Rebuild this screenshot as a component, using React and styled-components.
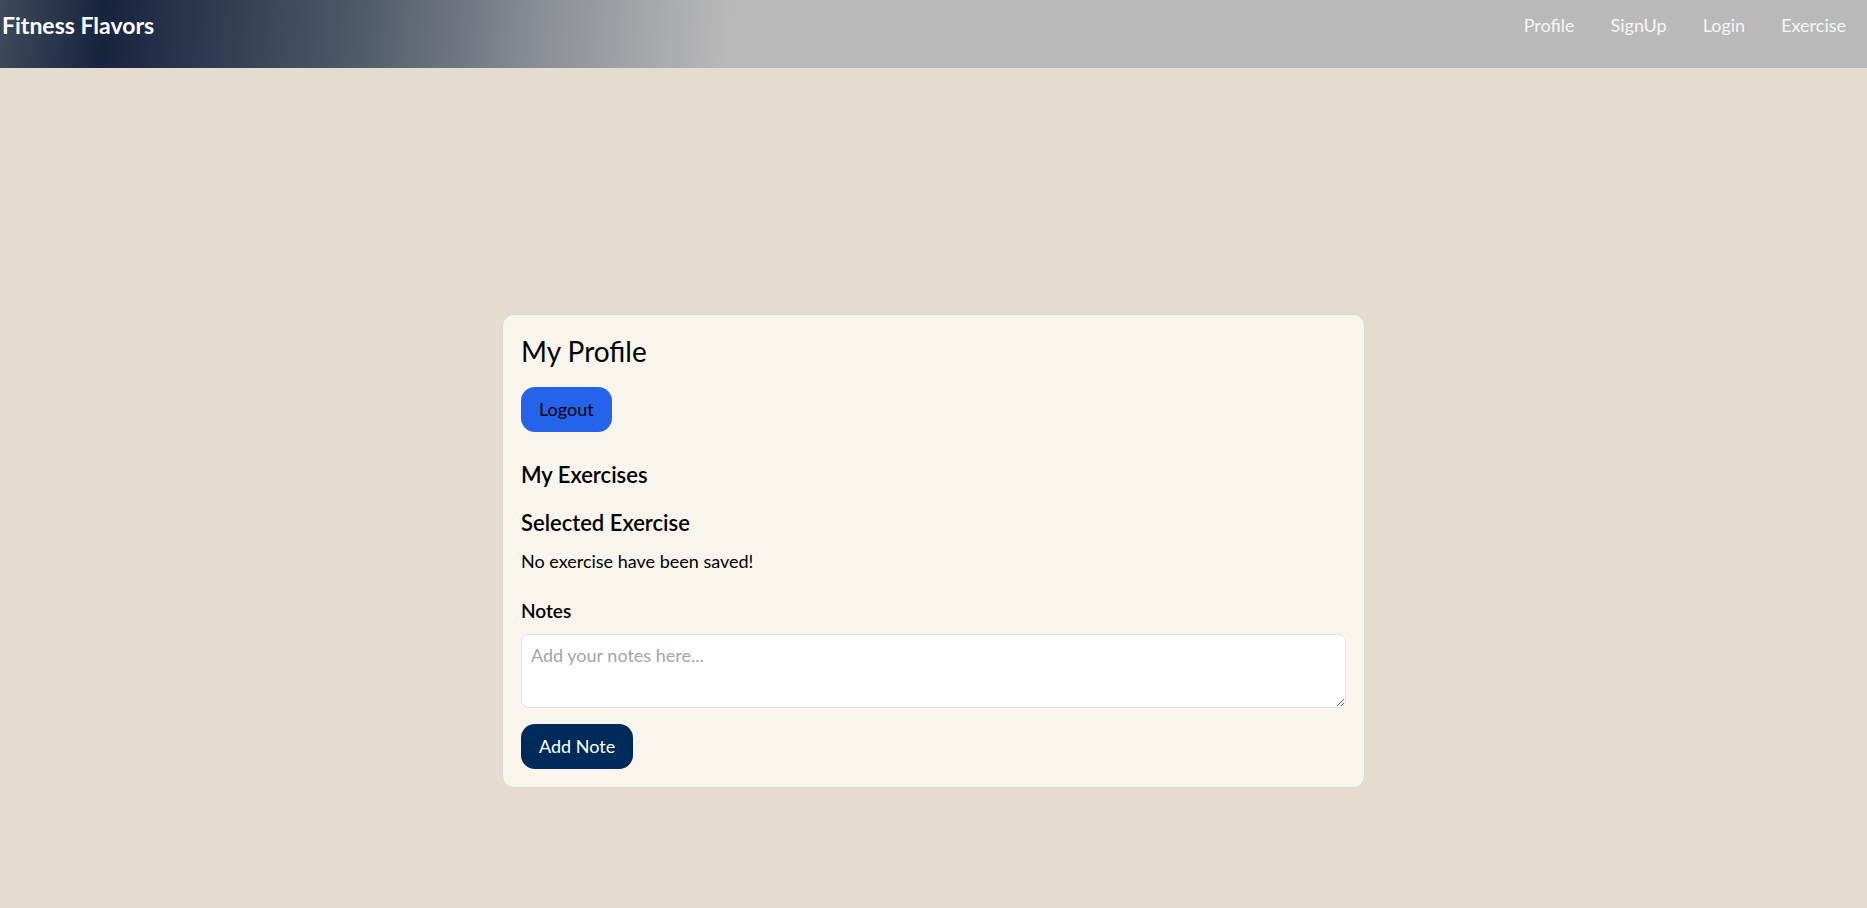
import React from "react";
import styled, { createGlobalStyle } from "styled-components";

const Global = createGlobalStyle`
  html, body { margin: 0; padding: 0; }
  body {
    background: #e4dccf;
    font-family: "Lato", "Noto Sans", sans-serif;
    color: #000;
  }
  * { box-sizing: border-box; }
`;

const Header = styled.header`
  height: 68px;
  display: flex;
  align-items: flex-start;
  justify-content: space-between;
  padding: 11px 21px 0 2px;
  background: linear-gradient(95deg, #3f4a5c 0px, #17243f 105px, #4f5a6a 360px, #8d9097 550px, #b9b9b9 730px, #b9b9b9 100%);
`;

const Brand = styled.div`
  font-size: 23px;
  line-height: 1.2;
  font-weight: 700;
  color: #fff;
  margin-top: 1px;
`;

const Nav = styled.nav`
  display: flex;
  gap: 36px;
  padding-top: 4px;
`;

const NavLink = styled.a`
  font-size: 18px;
  line-height: 1.2;
  color: #f6f6f6;
  text-decoration: none;
  cursor: pointer;
`;

const Card = styled.section`
  width: 863px;
  margin: 246px auto 0;
  background: #f9f5ec;
  border: 1px solid #dcd9d6;
  border-radius: 12px;
  padding: 18px;
  display: flex;
  flex-direction: column;
  align-items: flex-start;
`;

const Title = styled.h2`
  margin: 2px 0 18px;
  font-size: 28px;
  line-height: 1.2;
  font-weight: 400;
`;

const SubTitle = styled.h3`
  margin: ${(p) => p.$mt || 0}px 0 0;
  font-size: ${(p) => p.$size || 22}px;
  line-height: 1.2;
  font-weight: 600;
`;

const Text = styled.p`
  margin: 15px 0 0;
  font-size: 18px;
  line-height: 1.2;
`;

const Button = styled.button`
  height: 45px;
  padding: 0 18px;
  border: none;
  border-radius: 14px;
  font-family: inherit;
  font-size: 18px;
  background: ${(p) => (p.$variant === "navy" ? "#002a5a" : "#2563eb")};
  color: ${(p) => (p.$variant === "navy" ? "#fff" : "#000")};
  margin-top: ${(p) => p.$mt || 0}px;
  cursor: pointer;
`;

const NoteArea = styled.textarea`
  margin-top: 11px;
  width: 100%;
  height: 74px;
  border: 1px solid #e2e2e2;
  border-radius: 8px;
  background: #fff;
  padding: 9px 9px;
  font-family: inherit;
  font-size: 18px;
  resize: vertical;
  &::placeholder { color: #a4a4b0; }
`;

export default function App() {
  return (
    <>
      <Global />
      <Header>
        <Brand>Fitness Flavors</Brand>
        <Nav>
          <NavLink>Profile</NavLink>
          <NavLink>SignUp</NavLink>
          <NavLink>Login</NavLink>
          <NavLink>Exercise</NavLink>
        </Nav>
      </Header>
      <Card>
        <Title>My Profile</Title>
        <Button>Logout</Button>
        <SubTitle $mt={30}>My Exercises</SubTitle>
        <SubTitle $mt={22}>Selected Exercise</SubTitle>
        <Text>No exercise have been saved!</Text>
        <SubTitle $mt={27} $size={19}>Notes</SubTitle>
        <NoteArea placeholder="Add your notes here..." />
        <Button $variant="navy" $mt={16}>Add Note</Button>
      </Card>
    </>
  );
}
